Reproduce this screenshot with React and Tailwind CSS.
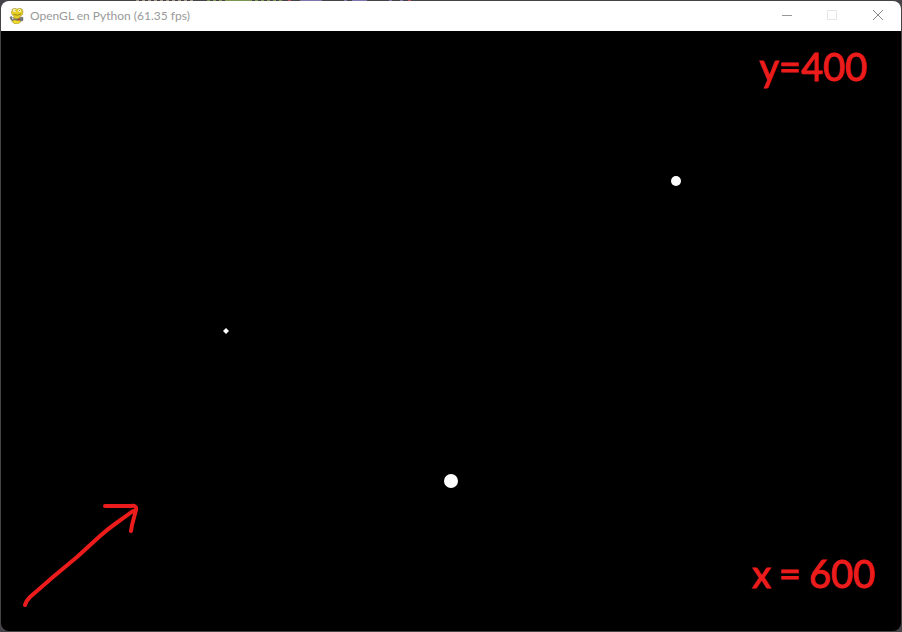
import React from "react";

const POINTS = [
  { x: 450, y: 450, r: 7 },
  { x: 675, y: 150, r: 5 },
];

function SnakeIcon() {
  return (
    <svg className="size-4 shrink-0" viewBox="0 0 16 16" aria-hidden="true">
      <path d="M3.500 1 6 .2l2 1 2.500-1L13 1l1 2.500-.5 3L11 8.500v2l1 3L9.500 15.500H5L3 13.500l1-3L5 8.500 3 6.500 2.500 4Z" fill="#e6cf22" stroke="#8d801d" strokeWidth=".5" />
      <path d="m1 9 1.500-.5L4 10l3 1 3-.5 2-1.500 2 .5v3L12.500 13l-2-1-2 .5-3-1L4 12.500 2 12Z" fill="#777" stroke="#555" strokeWidth=".4" />
      <path d="M5 14.300h5" stroke="#f0db2b" strokeWidth="2" />
      <path d="M9 11.500h2" stroke="#c33c35" strokeWidth="1.500" />
      <path d="M3 10.500h1.500" stroke="#ddd" strokeWidth="1.500" />
      <circle cx="5.500" cy="2.500" r="1.500" fill="#fff8c8" />
      <circle cx="10.500" cy="2.500" r="1.500" fill="#fff8c8" />
      <path d="M5.500 2.500h1m3.500 0h1M4.500 6.500q4 1.500 7.500-.5" fill="none" stroke="#776b16" strokeWidth=".7" />
    </svg>
  );
}

function TitleBar() {
  return (
    <header className="flex h-[30px] items-center bg-white pl-2 text-[#999]">
      <SnakeIcon />
      <h1 className="ml-[5px] grow font-[Lato,sans-serif] text-[12px] leading-4">
        OpenGL en Python (61.35 fps)
      </h1>
      <div className="flex h-full">
        <button type="button" aria-label="Minimize" className="flex w-[45px] items-center justify-center pb-px">
          <svg className="size-[11px]" viewBox="0 0 11 11"><path d="M0 5.500h10" stroke="#999" /></svg>
        </button>
        <button type="button" aria-label="Maximize" disabled className="flex w-[45px] items-center justify-center pb-px">
          <svg className="size-[11px]" viewBox="0 0 11 11"><rect x=".5" y=".5" width="9" height="9" rx=".5" fill="none" stroke="#e6e6e6" /></svg>
        </button>
        <button type="button" aria-label="Close" className="flex w-[46px] items-center justify-center pb-px">
          <svg className="size-[11px]" viewBox="0 0 11 11"><path d="m0 0 10 10m0-10L0 10" stroke="#888" /></svg>
        </button>
      </div>
    </header>
  );
}

function Scene() {
  return (
    <main className="relative flex grow flex-col items-end justify-between bg-black pt-[11px] pr-[26px] pb-[34px] pl-6 font-[Lato,sans-serif] text-[38px] leading-[48px] text-[#ed1c1c]">
      <svg className="absolute inset-0 size-full" viewBox="0 0 900 600" aria-hidden="true">
        <path d="m225 297 3 3-3 3-3-3Z" fill="#fff" />
        {POINTS.map((p) => (
          <circle key={p.x} cx={p.x} cy={p.y} r={p.r} fill="#fff" />
        ))}
        <path
          d="M24 574Q25 570 29 566L52 546 76 526 99 505Q107 498 114 493L132 480M104 475h26q6-1 5 4l-4 15-1 6"
          fill="none"
          stroke="#ed1c1c"
          strokeWidth="4"
          strokeLinecap="round"
          strokeLinejoin="round"
        />
      </svg>
      <p className="relative flex px-2 [-webkit-text-stroke:1px_#ed1c1c]">
        <span>y</span><span>=</span><span>400</span>
      </p>
      <p className="relative flex gap-2 [-webkit-text-stroke:1px_#ed1c1c]">
        <span>x</span><span>=</span><span>600</span>
      </p>
    </main>
  );
}

function DesktopEdge() {
  return (
    <svg className="absolute inset-x-0 top-0 h-px w-full" viewBox="0 0 902 1" preserveAspectRatio="none" aria-hidden="true">
      <path d="M136 .5H196" stroke="#a99a88" strokeDasharray="3 3" />
      <path d="M207 .5H283" stroke="#7b9650" strokeDasharray="3 3" />
      <path d="M227 .5h22" stroke="#7b9650" />
      <path d="M300 .5h22m22 0h3m5 0h15m22 0h3m8 0h3" stroke="#7d75ac" />
      <path d="M288 .5h3m117 0h3" stroke="#b65361" />
    </svg>
  );
}

export default function App() {
  return (
    <div className="relative flex min-h-screen bg-[#454347] p-px">
      <DesktopEdge />
      <div className="flex grow flex-col overflow-hidden rounded-lg">
        <TitleBar />
        <Scene />
      </div>
    </div>
  );
}
